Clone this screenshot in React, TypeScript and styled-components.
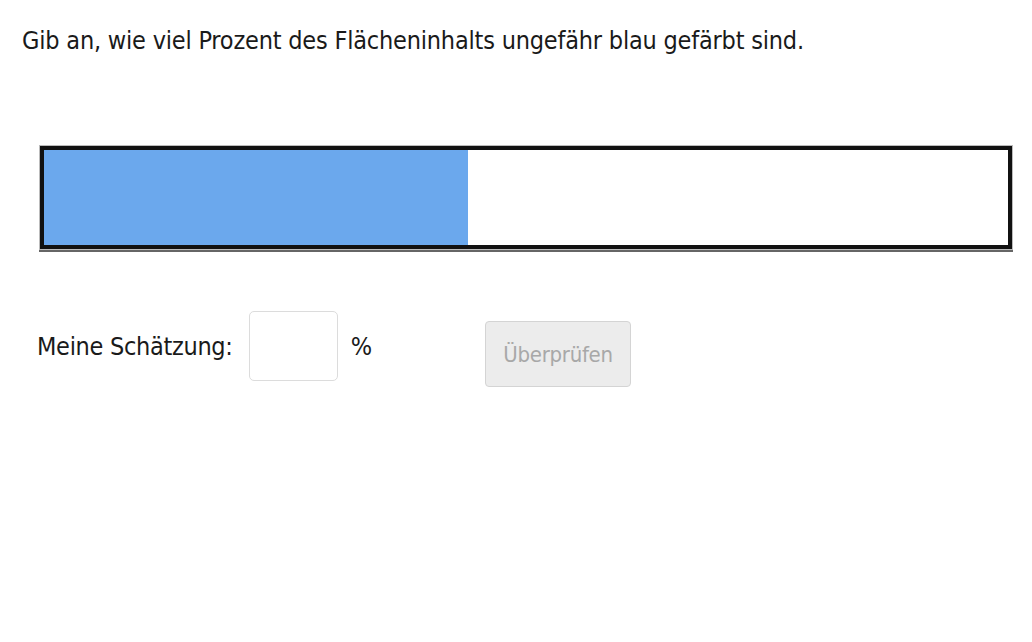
import React, { useState } from 'react';
import styled, { createGlobalStyle } from 'styled-components';

const GlobalStyle = createGlobalStyle`
  html, body {
    margin: 0;
    padding: 0;
    background: #fff;
  }
  body {
    font-family: 'DejaVu Sans Condensed', 'DejaVu Sans', sans-serif;
    font-stretch: condensed;
    color: #111;
  }
`;

const Page = styled.div`
  width: 1032px;
  height: 642px;
  padding: 25px 20px 0 22px;
  box-sizing: border-box;
`;

const Prompt = styled.p`
  margin: 0;
  font-size: 25px;
  line-height: 32px;
  letter-spacing: -0.2px;
  color: #1a1a1a;
`;

const Bar = styled.div`
  margin: 89px 0 0 18px;
  height: 103px;
  border: 4px solid #111;
  box-shadow: 0 0 0 1px #bbb, 0 2px 0 1px #666;
  box-sizing: border-box;
  background: #fff;
  display: flex;
`;

const Fill = styled.div<{ share: number }>`
  width: ${({ share }) => share}%;
  height: 100%;
  background: #6ba8ed;
`;

const AnswerRow = styled.div`
  display: flex;
  align-items: center;
  margin: 56px 0 0 15px;
`;

const Label = styled.label`
  font-size: 25px;
  letter-spacing: -0.3px;
  color: #1a1a1a;
`;

const Guess = styled.input`
  width: 89px;
  height: 70px;
  margin-left: 16px;
  box-sizing: border-box;
  border: 1px solid #dcdcdc;
  border-radius: 5px;
  font: inherit;
  font-size: 24px;
  text-align: center;
  outline: none;
`;

const Unit = styled.span`
  font-size: 25px;
  margin-left: 13px;
  color: #1a1a1a;
`;

const CheckButton = styled.button`
  margin-left: 113px;
  width: 146px;
  height: 66px;
  margin-top: 16px;
  box-sizing: border-box;
  border: 1px solid #d4d4d4;
  border-radius: 4px;
  background: #ececec;
  color: #a8a8a8;
  font-family: inherit;
  font-stretch: condensed;
  font-size: 22px;
  letter-spacing: -0.3px;
  cursor: default;
`;

export default function App() {
  const [guess, setGuess] = useState('');
  const share = 44;

  return (
    <>
      <GlobalStyle />
      <Page>
        <Prompt>Gib an, wie viel Prozent des Flächeninhalts ungefähr blau gefärbt sind.</Prompt>
        <Bar>
          <Fill share={share} />
        </Bar>
        <AnswerRow>
          <Label htmlFor="guess">Meine Schätzung:</Label>
          <Guess id="guess" value={guess} onChange={(e) => setGuess(e.target.value)} />
          <Unit>%</Unit>
          <CheckButton disabled={guess === ''}>Überprüfen</CheckButton>
        </AnswerRow>
      </Page>
    </>
  );
}
